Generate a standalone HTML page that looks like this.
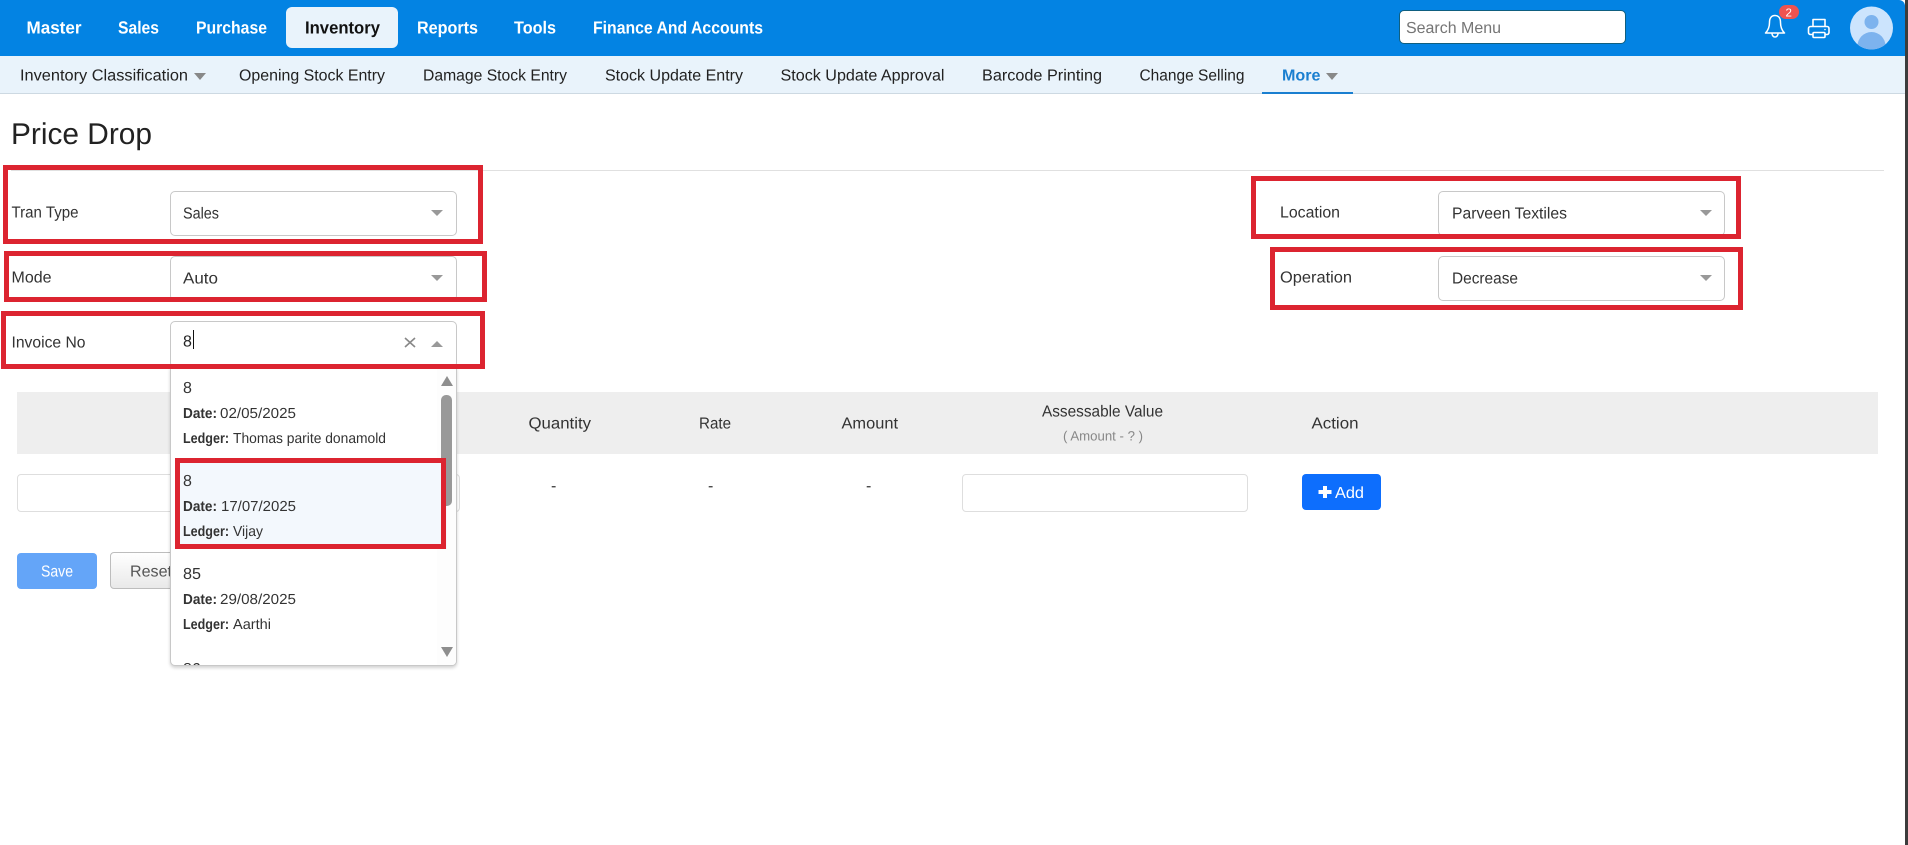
<!DOCTYPE html>
<html lang="en">
<head>
<meta charset="utf-8">
<title>Price Drop</title>
<style>
html,body{margin:0;padding:0;background:#fff}
body{position:relative;width:1908px;height:845px;overflow:hidden;font-family:"Liberation Sans",sans-serif}
.a{position:absolute;box-sizing:border-box}
.layer{position:absolute;left:0;top:0;width:1908px;height:845px;pointer-events:none}
svg text{font-family:"Liberation Sans",sans-serif;fill:#333;text-rendering:geometricPrecision}
.sel{background:#fff;border:1px solid #c8c8c8;border-radius:5px}
.red{border:5px solid #dc2430}
</style>
</head>
<body>
<div class="a" style="left:0;top:0;width:1905px;height:56px;background:#0383e3;border-top-right-radius:6px"></div>
<div class="a" style="left:286px;top:7px;width:112px;height:41px;background:#e9f3fb;border-radius:6px"></div>
<div class="a" style="left:0;top:56px;width:1905px;height:38px;background:#e9f3fb;border-bottom:1px solid #cdd9e2"></div>
<div class="a" style="left:1262px;top:92px;width:91px;height:2px;background:#1a7fd0"></div>
<div class="a" style="left:1399px;top:10px;width:227px;height:34px;background:#fff;border:1px solid #0f5f80;border-radius:5px"></div>
<div class="a" style="left:1905px;top:0;width:3px;height:845px;background:#3c3c3c"></div>
<div class="a" style="left:1899px;top:0;width:6px;height:6px;background:#3c3c3c;z-index:-1"></div>
<div class="a" style="left:11px;top:170px;width:1873px;height:1px;background:#e0e0e0"></div>

<div class="a" style="left:17px;top:392px;width:1861px;height:62px;background:#eeeeee"></div>
<div class="a" style="left:17px;top:474px;width:443px;height:38px;background:#fff;border:1px solid #dedede;border-radius:4px"></div>
<div class="a" style="left:962px;top:474px;width:286px;height:38px;background:#fff;border:1px solid #dedede;border-radius:4px"></div>
<div class="a" style="left:1301.500px;top:474px;width:79.500px;height:36px;background:#0d6efd;border-radius:4px"></div>
<div class="a" style="left:17px;top:553px;width:80px;height:36px;background:#64a5f8;border-radius:4px"></div>
<div class="a" style="left:110px;top:552px;width:90px;height:37px;background:linear-gradient(#ffffff,#e9e9e9);border:1px solid #bdbdbd;border-radius:4px"></div>

<div class="a sel" style="left:170px;top:191px;width:287px;height:45px"></div>
<div class="a sel" style="left:170px;top:256px;width:287px;height:45px"></div>
<div class="a sel" style="left:170px;top:321px;width:287px;height:47px"></div>
<div class="a sel" style="left:1438px;top:191px;width:287px;height:45px"></div>
<div class="a sel" style="left:1438px;top:256px;width:287px;height:45px"></div>

<svg class="layer" style="z-index:1" viewBox="0 0 1908 845" xmlns="http://www.w3.org/2000/svg">
<g font-size="17.5" font-weight="700">
<text x="26.5" y="33.500" textLength="55" lengthAdjust="spacingAndGlyphs" style="fill:#fff">Master</text>
<text x="118" y="33.500" textLength="41" lengthAdjust="spacingAndGlyphs" style="fill:#fff">Sales</text>
<text x="196" y="33.500" textLength="71" lengthAdjust="spacingAndGlyphs" style="fill:#fff">Purchase</text>
<text x="305" y="33.500" textLength="75" lengthAdjust="spacingAndGlyphs" style="fill:#111">Inventory</text>
<text x="417" y="33.500" textLength="61" lengthAdjust="spacingAndGlyphs" style="fill:#fff">Reports</text>
<text x="514" y="33.500" textLength="42" lengthAdjust="spacingAndGlyphs" style="fill:#fff">Tools</text>
<text x="593" y="33.500" textLength="170" lengthAdjust="spacingAndGlyphs" style="fill:#fff">Finance And Accounts</text>
</g>
<text x="1406" y="33" font-size="16" textLength="95" lengthAdjust="spacingAndGlyphs" style="fill:#757575">Search Menu</text>
<g font-size="16">
<text x="20" y="80.500" textLength="168" lengthAdjust="spacingAndGlyphs" style="fill:#222">Inventory Classification</text>
<text x="239" y="80.500" textLength="146" lengthAdjust="spacingAndGlyphs" style="fill:#222">Opening Stock Entry</text>
<text x="423" y="80.500" textLength="144" lengthAdjust="spacingAndGlyphs" style="fill:#222">Damage Stock Entry</text>
<text x="605" y="80.500" textLength="138" lengthAdjust="spacingAndGlyphs" style="fill:#222">Stock Update Entry</text>
<text x="780.500" y="80.500" textLength="164" lengthAdjust="spacingAndGlyphs" style="fill:#222">Stock Update Approval</text>
<text x="982" y="80.500" textLength="120" lengthAdjust="spacingAndGlyphs" style="fill:#222">Barcode Printing</text>
<text x="1139.500" y="80.500" textLength="105" lengthAdjust="spacingAndGlyphs" style="fill:#222">Change Selling</text>
<text x="1282" y="80.500" textLength="38.5" lengthAdjust="spacingAndGlyphs" font-weight="700" style="fill:#1a7fd0">More</text>
</g>
<polygon points="194,73 206,73 200,80" fill="#888"/>
<polygon points="1326,73 1338,73 1332,80" fill="#888"/>

<text x="11" y="144" font-size="30" textLength="141" lengthAdjust="spacingAndGlyphs" style="fill:#222">Price Drop</text>

<g font-size="16">
<text x="528.500" y="428.500" textLength="62.5" lengthAdjust="spacingAndGlyphs">Quantity</text>
<text x="699" y="428.500" textLength="32" lengthAdjust="spacingAndGlyphs">Rate</text>
<text x="841.5" y="428.500" textLength="56.5" lengthAdjust="spacingAndGlyphs">Amount</text>
<text x="1042" y="416.500" textLength="121" lengthAdjust="spacingAndGlyphs">Assessable Value</text>
<text x="1311.5" y="428.500" textLength="47" lengthAdjust="spacingAndGlyphs">Action</text>
<text x="551" y="491">-</text>
<text x="708" y="491">-</text>
<text x="866" y="491">-</text>
<text x="1335" y="498" textLength="29" lengthAdjust="spacingAndGlyphs" style="fill:#fff">Add</text>
<text x="41" y="576.500" textLength="32" lengthAdjust="spacingAndGlyphs" style="fill:#fff">Save</text>
<text x="130" y="576.500" textLength="42" lengthAdjust="spacingAndGlyphs" style="fill:#555">Reset</text>
</g>
<text x="1063" y="440.500" font-size="13.5" textLength="80" lengthAdjust="spacingAndGlyphs" style="fill:#888">( Amount - ? )</text>
<path d="M1323 486h4v4h4.500v4h-4.500v4h-4v-4h-4.500v-4h4.500z" fill="#fff"/>

<!-- bell -->
<path d="M1765.500 33 C1769 29.500 1769.500 26 1769.500 22.500 C1769.500 18 1771.500 15.500 1775 15.500 C1778.500 15.500 1780.500 18 1780.500 22.500 C1780.500 26 1781 29.500 1784.500 33 Z" fill="none" stroke="#fff" stroke-width="1.500" stroke-linejoin="round"/>
<path d="M1772 33.500 a3 3.500 0 0 0 6 0" fill="none" stroke="#fff" stroke-width="1.500"/>
<rect x="1779" y="5" width="20" height="14" rx="7" fill="#ef5350"/>
<text x="1785.500" y="16.500" font-size="11.500" style="fill:#fff">2</text>
<!-- printer -->
<path d="M1813 26.500 V19.500 H1825 V26.500" fill="none" stroke="#fff" stroke-width="1.600" stroke-linejoin="round"/>
<path d="M1813 34.500 H1810.500 a2 2 0 0 1 -2 -2 V28.500 a2 2 0 0 1 2 -2 H1827 a2 2 0 0 1 2 2 V32.500 a2 2 0 0 1 -2 2 H1825" fill="none" stroke="#fff" stroke-width="1.600" stroke-linejoin="round"/>
<rect x="1813" y="32.500" width="12" height="5" rx="1" fill="none" stroke="#fff" stroke-width="1.600"/>
<circle cx="1825" cy="29.500" r=".8" fill="#fff"/>
<!-- avatar -->
<clipPath id="av"><circle cx="1871.500" cy="28" r="21.500"/></clipPath>
<circle cx="1871.500" cy="28" r="21.500" fill="#cce4fd"/>
<circle cx="1871.500" cy="22" r="7" fill="#7db3ee"/>
<ellipse cx="1871.500" cy="46" rx="14" ry="14" fill="#7db3ee" clip-path="url(#av)"/>
</svg>

<!-- dropdown panel -->
<div class="a" style="z-index:2;left:170px;top:367px;width:287px;height:299px;background:#fff;border:1px solid #c8c8c8;border-top:0;border-radius:0 0 5px 5px;box-shadow:0 2px 3px rgba(0,0,0,.18);overflow:hidden">
  <div class="a" style="left:266px;top:0;width:20px;height:299px;background:#fdfdfd"></div>
  <div class="a" style="left:4px;top:91px;width:272px;height:91px;background:#f3f8fd"></div>
  <div class="a" style="left:270px;top:28px;width:11px;height:111px;background:#999;border-radius:5px"></div>
</div>

<svg class="layer" style="z-index:3" viewBox="0 0 1908 845" xmlns="http://www.w3.org/2000/svg">
<polygon points="447,376 453,386 441,386" fill="#8e8e8e"/>
<polygon points="441,647 453,647 447,657" fill="#8e8e8e"/>
<g font-size="16">
<text x="11.500" y="217.500" textLength="67" lengthAdjust="spacingAndGlyphs">Tran Type</text>
<text x="11.500" y="282.500" textLength="40" lengthAdjust="spacingAndGlyphs">Mode</text>
<text x="11.500" y="347.500" textLength="74" lengthAdjust="spacingAndGlyphs">Invoice No</text>
<text x="1280" y="217.500" textLength="60" lengthAdjust="spacingAndGlyphs">Location</text>
<text x="1280" y="282.500" textLength="72" lengthAdjust="spacingAndGlyphs">Operation</text>
<text x="183" y="218.500" textLength="36" lengthAdjust="spacingAndGlyphs">Sales</text>
<text x="183" y="283.500" textLength="35" lengthAdjust="spacingAndGlyphs">Auto</text>
<text x="183" y="346.500" style="fill:#222">8</text>
<text x="1452" y="218.500" textLength="115" lengthAdjust="spacingAndGlyphs">Parveen Textiles</text>
<text x="1452" y="283.500" textLength="66" lengthAdjust="spacingAndGlyphs">Decrease</text>
</g>
<rect x="193" y="330" width="1" height="19" fill="#111"/>
<polygon points="431,210 443,210 437,216" fill="#999"/>
<polygon points="431,275 443,275 437,281" fill="#999"/>
<polygon points="1700,210 1712,210 1706,216" fill="#999"/>
<polygon points="1700,275 1712,275 1706,281" fill="#999"/>
<polygon points="431,347 443,347 437,341" fill="#999"/>
<path d="M405 338 L415 347 M415 338 L405 347" stroke="#888" stroke-width="1.600" fill="none"/>

<g font-size="16">
<text x="183" y="393">8</text>
<text x="183" y="486">8</text>
<text x="183" y="579" textLength="18" lengthAdjust="spacingAndGlyphs">85</text>
</g>
<g font-size="14.500">
<text x="183" y="418" textLength="34" lengthAdjust="spacingAndGlyphs" font-weight="700">Date:</text>
<text x="220" y="418" textLength="76" lengthAdjust="spacingAndGlyphs">02/05/2025</text>
<text x="183" y="443" textLength="46" lengthAdjust="spacingAndGlyphs" font-weight="700">Ledger:</text>
<text x="233" y="443" textLength="153" lengthAdjust="spacingAndGlyphs">Thomas parite donamold</text>
<text x="183" y="511" textLength="34" lengthAdjust="spacingAndGlyphs" font-weight="700">Date:</text>
<text x="221" y="511" textLength="75" lengthAdjust="spacingAndGlyphs">17/07/2025</text>
<text x="183" y="536" textLength="46" lengthAdjust="spacingAndGlyphs" font-weight="700">Ledger:</text>
<text x="233" y="536" textLength="30" lengthAdjust="spacingAndGlyphs">Vijay</text>
<text x="183" y="604" textLength="34" lengthAdjust="spacingAndGlyphs" font-weight="700">Date:</text>
<text x="220" y="604" textLength="76" lengthAdjust="spacingAndGlyphs">29/08/2025</text>
<text x="183" y="629" textLength="46" lengthAdjust="spacingAndGlyphs" font-weight="700">Ledger:</text>
<text x="233" y="629" textLength="38" lengthAdjust="spacingAndGlyphs">Aarthi</text>
</g>
</svg>

<!-- 86 item clipped at the bottom of the dropdown -->
<div class="a" style="z-index:3;left:171px;top:660px;width:264px;height:5px;overflow:hidden">
  <span class="a" style="left:12px;top:0;font-size:16px;line-height:20px;color:#333">86</span>
</div>

<div class="a red" style="z-index:4;left:3px;top:165px;width:480px;height:79px"></div>
<div class="a red" style="z-index:4;left:4px;top:251px;width:483px;height:51px"></div>
<div class="a red" style="z-index:4;left:1px;top:311px;width:484px;height:58px"></div>
<div class="a red" style="z-index:4;left:1251px;top:176px;width:490px;height:63px"></div>
<div class="a red" style="z-index:4;left:1270px;top:247px;width:473px;height:63px"></div>
<div class="a red" style="z-index:4;left:175px;top:458px;width:271px;height:91px"></div>
</body>
</html>
